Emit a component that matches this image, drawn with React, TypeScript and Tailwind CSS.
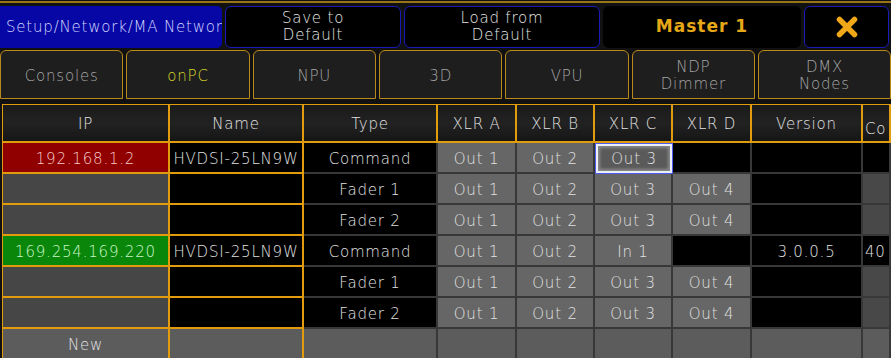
import React from "react";

const GOLD = "border-[#e09c0c]";
const DARK = "border-[#383838]";

type CellProps = {
  children?: React.ReactNode;
  gold?: boolean;
  bg: string;
  text?: string;
  align?: "center" | "left";
};

function Cell({ children, gold, bg, text = "text-[#e2e2e2]", align = "center" }: CellProps) {
  return (
    <div
      className={`h-[31px] pt-[3px] border-r-2 border-b-2 ${gold ? GOLD : DARK} ${bg} ${text} flex items-center ${
        align === "center" ? "justify-center" : "justify-start pl-[2px]"
      } overflow-hidden whitespace-nowrap`}
    >
      {children}
    </div>
  );
}

function HighlightCell({ children }: { children: React.ReactNode }) {
  return (
    <div className="h-[31px] border border-[#4c5cf0] bg-[#4c5cf0]">
      <div className="h-full w-full pt-[2px] border-2 border-[#eceef8] bg-[#5a5a5a] shadow-[inset_0_0_3px_2px_#8a8a8a] flex items-center justify-center text-[#e2e2e2]">
        {children}
      </div>
    </div>
  );
}

type Row = {
  ip: string;
  ipKind: "red" | "green" | "empty";
  name: string;
  type: string;
  a: string;
  b: string;
  c: string;
  cHighlight?: boolean;
  d: string | null;
  ver: string;
  co: string | null;
};

const rows: Row[] = [
  { ip: "192.168.1.2", ipKind: "red", name: "HVDSI-25LN9W", type: "Command", a: "Out 1", b: "Out 2", c: "Out 3", cHighlight: true, d: null, ver: "", co: "" },
  { ip: "", ipKind: "empty", name: "", type: "Fader 1", a: "Out 1", b: "Out 2", c: "Out 3", d: "Out 4", ver: "", co: null },
  { ip: "", ipKind: "empty", name: "", type: "Fader 2", a: "Out 1", b: "Out 2", c: "Out 3", d: "Out 4", ver: "", co: null },
  { ip: "169.254.169.220", ipKind: "green", name: "HVDSI-25LN9W", type: "Command", a: "Out 1", b: "Out 2", c: "In 1", d: null, ver: "3.0.0.5", co: "40" },
  { ip: "", ipKind: "empty", name: "", type: "Fader 1", a: "Out 1", b: "Out 2", c: "Out 3", d: "Out 4", ver: "", co: null },
  { ip: "", ipKind: "empty", name: "", type: "Fader 2", a: "Out 1", b: "Out 2", c: "Out 3", d: "Out 4", ver: "", co: null },
];

const XLR = "bg-[#666666]";

function TwoLines({ a, b }: { a: string; b: string }) {
  return (
    <div className="flex flex-col items-center">
      <div className="h-[17px] leading-[17px]">{a}</div>
      <div className="h-[17px] leading-[17px]">{b}</div>
    </div>
  );
}

function Tab({ label, active, wide }: { label: React.ReactNode; active?: boolean; wide?: boolean }) {
  return (
    <div
      className={`${wide ? "w-[133px]" : "flex-1"} h-full pt-[3px] border border-[#b8891c] rounded-t-[6px] bg-[#1e1e1e] flex items-center justify-center text-center ${
        active ? "text-[#d6d62a]" : "text-[#a6a6a6]"
      }`}
    >
      {label}
    </div>
  );
}

function Header({ children, last }: { children?: React.ReactNode; last?: boolean }) {
  return (
    <div
      className={`h-[38px] border-r-2 border-b-2 ${GOLD} bg-gradient-to-b from-[#1a1a1a] via-[#222222] to-[#161616] text-[#e2e2e2] flex ${
        last ? "items-end pb-[1px] justify-start pl-[2px]" : "items-center justify-center pt-[2px]"
      } overflow-hidden whitespace-nowrap`}
    >
      {children}
    </div>
  );
}

export default function App() {
  return (
    <div className="w-[891px] h-[358px] overflow-hidden bg-[#111111] font-['DejaVu_Sans',sans-serif] font-light text-[15px] tracking-[0.8px]">
      {/* top gold line */}
      <div className="h-[2px] mt-[1px] bg-[#9a7418]" />

      {/* title bar */}
      <div className="flex h-[42px] mt-[3px] gap-[3px]">
        <div className="w-[222px] h-full bg-[#0707a6] rounded-r-[5px] flex items-center pl-[6px] text-[#d4d8ff] overflow-hidden whitespace-nowrap">
          <span>Setup/Network/MA Networ</span>
        </div>
        <div className="w-[176px] h-full rounded-[6px] border-[1.5px] border-[#1a1ab4] bg-black flex items-center justify-center text-[#e6e6e6]">
          <TwoLines a="Save to" b="Default" />
        </div>
        <div className="w-[196px] h-full rounded-[6px] border-[1.5px] border-[#1a1ab4] bg-black flex items-center justify-center text-[#e6e6e6]">
          <TwoLines a="Load from" b="Default" />
        </div>
        <div className="w-[198px] h-full rounded-[6px] bg-black flex items-center justify-center text-[17px] font-bold tracking-[1px] text-[#e6a817]">
          <span>Master 1</span>
        </div>
        <div className="w-[85px] h-full rounded-[6px] border-[1.5px] border-[#1a1ab4] bg-black flex items-center justify-center">
          <svg width="22" height="22" viewBox="0 0 22 22">
            <path d="M3.5 3.5 L18.5 18.5 M18.5 3.5 L3.5 18.5" stroke="#f0a818" strokeWidth="5.5" strokeLinecap="round" />
          </svg>
        </div>
      </div>

      {/* tabs */}
      <div className="flex h-[49px] mt-[2px] gap-[3px]">
        <Tab label="Consoles" />
        <Tab label="onPC" active />
        <Tab label="NPU" />
        <Tab label="3D" />
        <Tab label="VPU" />
        <Tab label={<TwoLines a="NDP" b="Dimmer" />} />
        <Tab wide label={<TwoLines a="DMX" b="Nodes" />} />
      </div>

      {/* table */}
      <div className="mt-[5px] ml-[2px] border-t border-l border-[#e09c0c] grid grid-cols-[167px_134px_134px_79px_78px_78px_79px_111px_28px]">
        <Header>IP</Header>
        <Header>Name</Header>
        <Header>Type</Header>
        <Header>XLR A</Header>
        <Header>XLR B</Header>
        <Header>XLR C</Header>
        <Header>XLR D</Header>
        <Header>Version</Header>
        <Header last>Co</Header>

        {rows.map((r, i) => (
          <React.Fragment key={i}>
            <Cell
              gold
              bg={r.ipKind === "red" ? "bg-[#900000]" : r.ipKind === "green" ? "bg-[#0a860a]" : "bg-[#464646]"}
              text={r.ipKind === "red" ? "text-[#f6caca]" : r.ipKind === "green" ? "text-[#caf6ca]" : "text-[#e2e2e2]"}
            >
              {r.ip}
            </Cell>
            <Cell gold bg="bg-black">
              {r.name}
            </Cell>
            <Cell bg="bg-black">{r.type}</Cell>
            <Cell bg={XLR}>{r.a}</Cell>
            <Cell bg={XLR}>{r.b}</Cell>
            {r.cHighlight ? <HighlightCell>{r.c}</HighlightCell> : <Cell bg={XLR}>{r.c}</Cell>}
            {r.d === null ? <Cell bg="bg-black" /> : <Cell bg={XLR}>{r.d}</Cell>}
            <Cell bg="bg-black">{r.ver}</Cell>
            {r.co === null ? (
              <Cell bg="bg-[#484848]" />
            ) : (
              <Cell bg="bg-black" align="left">
                {r.co}
              </Cell>
            )}
          </React.Fragment>
        ))}

        <Cell gold bg="bg-[#5c5c5c]">
          New
        </Cell>
        <Cell gold bg="bg-[#5c5c5c]" />
        <Cell bg="bg-[#5c5c5c]" />
        <Cell bg="bg-[#5c5c5c]" />
        <Cell bg="bg-[#5c5c5c]" />
        <Cell bg="bg-[#5c5c5c]" />
        <Cell bg="bg-[#5c5c5c]" />
        <Cell bg="bg-[#5c5c5c]" />
        <Cell bg="bg-[#5c5c5c]" />
      </div>
    </div>
  );
}
